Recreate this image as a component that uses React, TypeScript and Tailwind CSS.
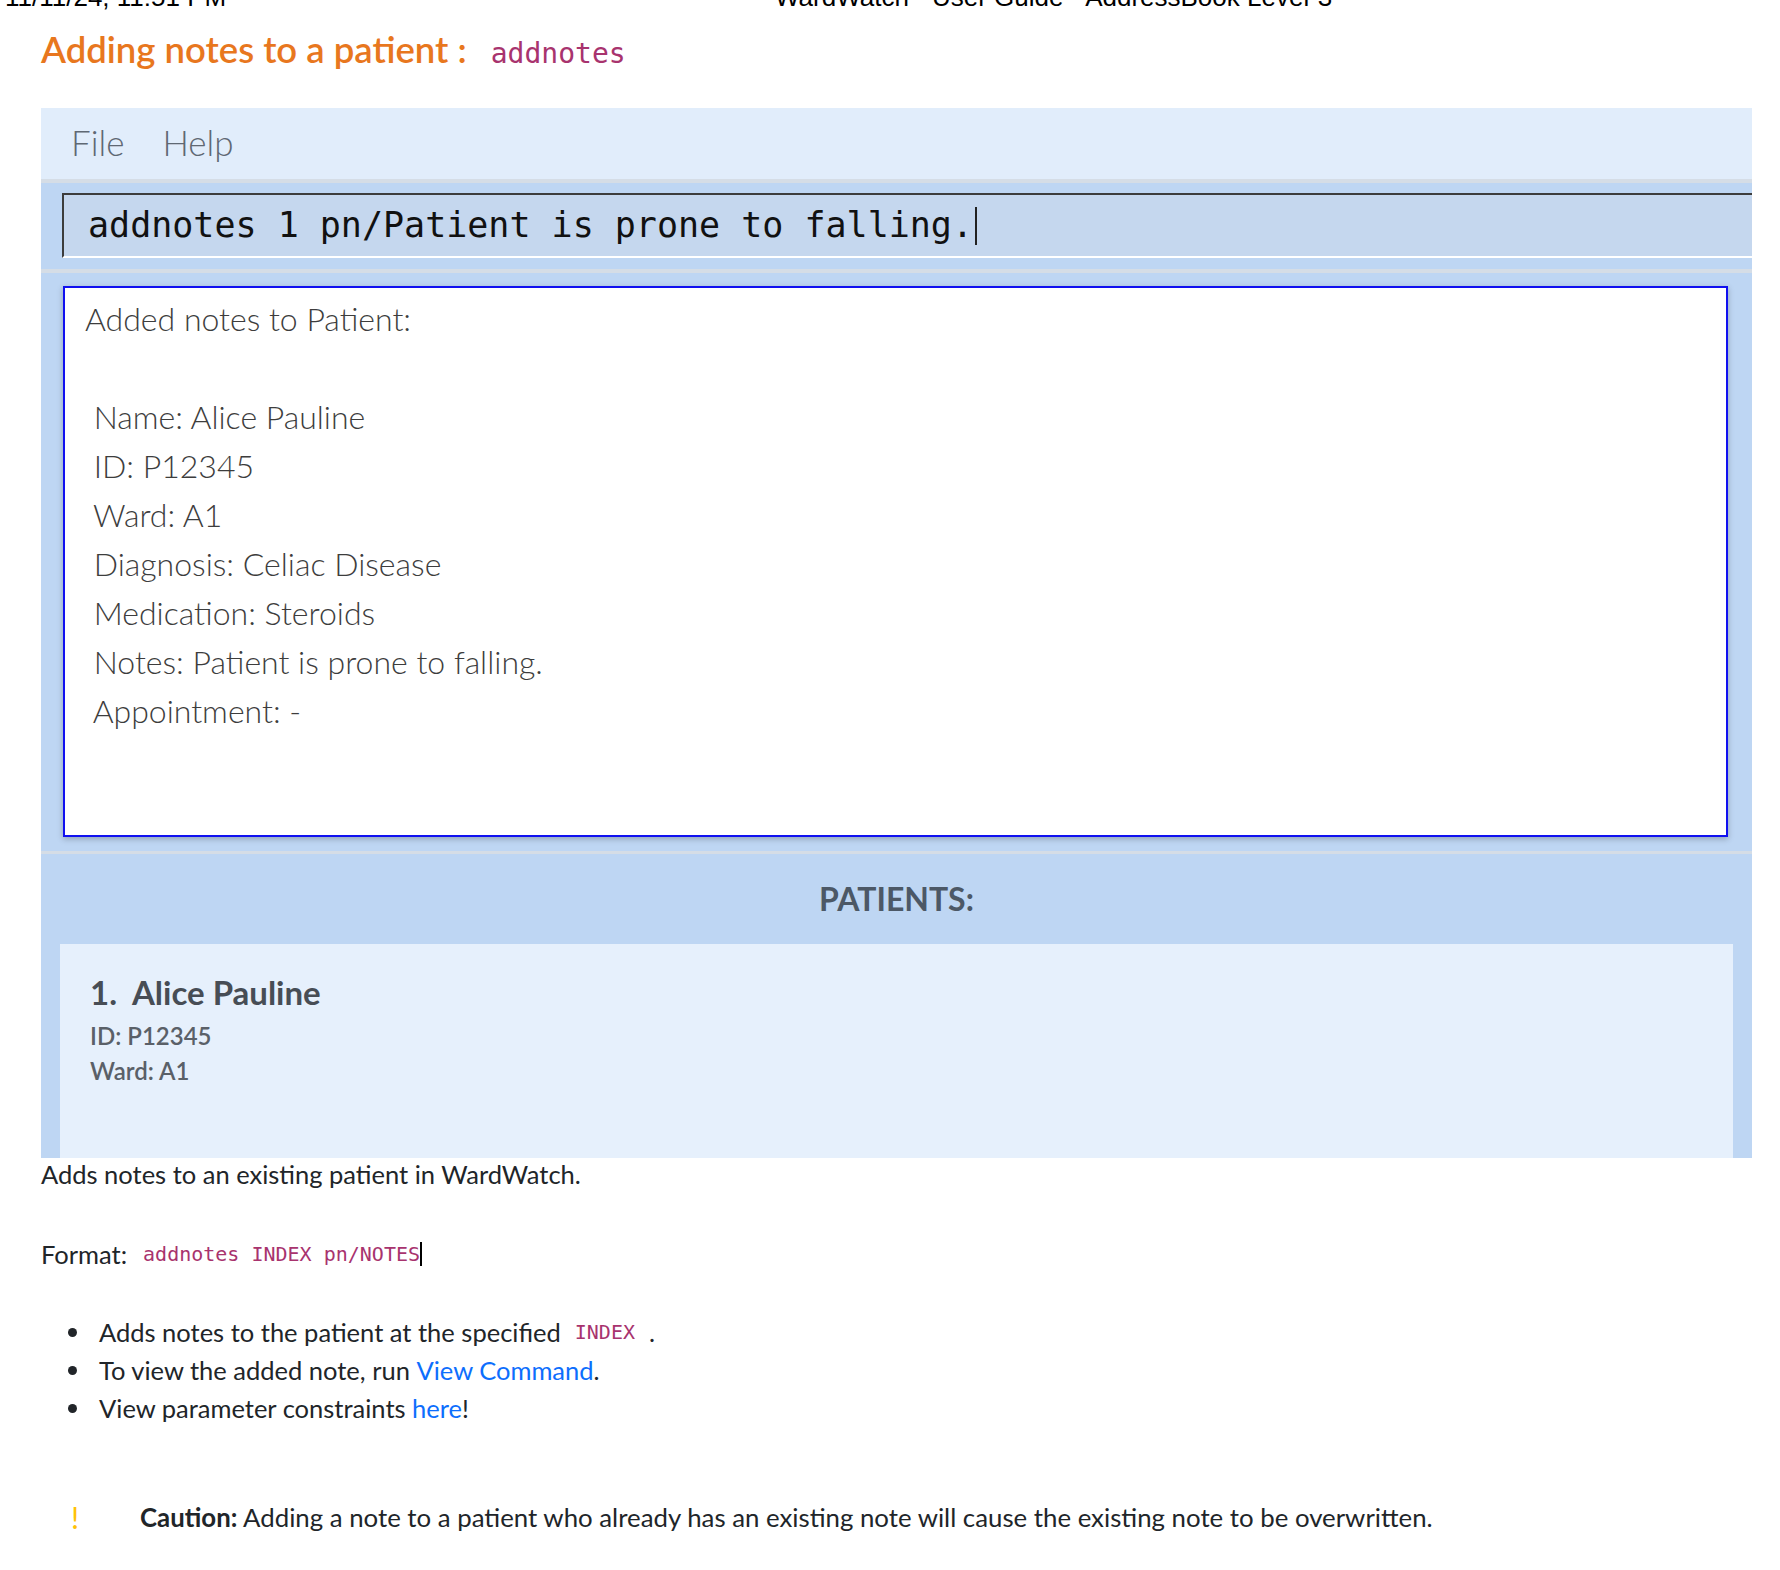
import React from "react";

const resultLines = [
  "Added notes to Patient:",
  "",
  " Name: Alice Pauline",
  " ID: P12345",
  " Ward: A1",
  " Diagnosis: Celiac Disease",
  " Medication: Steroids",
  " Notes: Patient is prone to falling.",
  " Appointment: -",
];

const App: React.FC = () => {
  return (
    <div className="relative w-[1780px] h-[1570px] overflow-hidden bg-white font-['Lato','Noto_Sans',sans-serif] text-[#212529]">
      {/* print header, cut off at the top */}
      <div className="-mt-[16px] flex h-[26px] items-end font-['Liberation_Sans',Arial,sans-serif] text-[26px] leading-[26px] text-black">
        <span className="w-[775px] shrink-0 pl-[5px]">11/11/24, 11:51 PM</span>
        <span>WardWatch - User Guide - AddressBook Level-3</span>
      </div>

      <div className="pl-[41px] pr-[28px]">
        {/* section title */}
        <h4 className="mt-[19px] flex h-[40px] items-baseline text-[36.5px] font-semibold leading-[40px] text-[#e8771e]">
          Adding notes to a patient :
          <code className="ml-[24px] font-['DejaVu_Sans_Mono',monospace] text-[28px] font-normal text-[#a8336e]">
            addnotes
          </code>
        </h4>

        {/* app screenshot */}
        <div className="mt-[39px] w-[1711px] bg-[#bed6f3]">
          {/* menu bar */}
          <div className="flex h-[71px] items-center gap-[38px] bg-[#e1edfb] pb-[3px] pl-[30px] text-[35px] font-light text-[#5f6873]">
            <span>File</span>
            <span>Help</span>
          </div>
          <div className="h-[4px] bg-[#d5dde6]" />

          {/* command box */}
          <div className="pl-[21px] pt-[10px] pb-[11px]">
            <div className="flex h-[65px] items-center border-t-2 border-l-2 border-b-2 border-t-[#3c3c3c] border-l-[#3c3c3c] border-b-white bg-[#c5d7ee] pl-[24px] font-['DejaVu_Sans_Mono',monospace] text-[35px] text-[#111]">
              <span>addnotes 1 pn/Patient is prone to falling.</span>
              <span className="ml-[2px] h-[38px] w-[2px] bg-[#222]" />
            </div>
          </div>
          <div className="h-[4px] bg-[#d5dde6]" />

          {/* result display */}
          <div className="pl-[22px] pr-[24px] pt-[13px] pb-[14px]">
            <div className="h-[551px] border-2 border-[#1010f0] bg-white pl-[20px] pt-[6px] shadow-[0_2px_6px_rgba(0,0,0,0.25)]">
              {resultLines.map((line, i) => (
                <div
                  key={i}
                  className="h-[49px] whitespace-pre text-[32px] font-light leading-[49px] text-[#3d3d3d]"
                >
                  {line}
                </div>
              ))}
            </div>
          </div>
          <div className="h-[3px] bg-[#d5dde6]" />

          {/* patient list */}
          <div className="flex h-[90px] items-center justify-center text-[32px] font-bold text-[#4c5866]">
            PATIENTS:
          </div>
          <div className="px-[19px]">
            <div className="h-[214px] bg-[#e6f0fc] pl-[30px] pt-[29px]">
              <div className="whitespace-pre text-[33px] font-bold leading-[38px] text-[#474d55]">
                1.  Alice Pauline
              </div>
              <div className="mt-[7px] text-[24px] font-semibold leading-[35px] text-[#5a6068]">
                ID: P12345
              </div>
              <div className="text-[24px] font-semibold leading-[35px] text-[#5a6068]">Ward: A1</div>
            </div>
          </div>
        </div>

        {/* guide text */}
        <p className="text-[25.5px] leading-[33px]">Adds notes to an existing patient in WardWatch.</p>

        <p className="mt-[45px] flex items-center text-[25.5px] leading-[36px]">
          Format:
          <code className="ml-[16px] font-['DejaVu_Sans_Mono',monospace] text-[20px] text-[#a8336e]">
            addnotes INDEX pn/NOTES
          </code>
          <span className="h-[24px] w-[2px] bg-black" />
        </p>

        <ul className="mt-[42px] flex flex-col gap-[2px] pl-[27px] text-[25.5px] leading-[36px]">
          <li className="flex items-center">
            <span className="mr-[22px] h-[9px] w-[9px] rounded-full bg-[#212529]" />
            Adds notes to the patient at the specified
            <code className="mx-[8px] px-[6px] font-['DejaVu_Sans_Mono',monospace] text-[20px] text-[#a8336e]">
              INDEX
            </code>
            .
          </li>
          <li className="flex items-center">
            <span className="mr-[22px] h-[9px] w-[9px] rounded-full bg-[#212529]" />
            To view the added note, run&nbsp;
            <a className="text-[#0d6efd]">View Command</a>.
          </li>
          <li className="flex items-center">
            <span className="mr-[22px] h-[9px] w-[9px] rounded-full bg-[#212529]" />
            View parameter constraints&nbsp;<a className="text-[#0d6efd]">here</a>!
          </li>
        </ul>

        {/* caution box */}
        <div className="mt-[73px] flex items-center text-[25.8px] leading-[36px]">
          <span className="w-[99px] pl-[30px] text-[30px] leading-[36px] text-[#ffc107]">!</span>
          <span>
            <b className="font-bold">Caution:</b> Adding a note to a patient who already has an existing note will
            cause the existing note to be overwritten.
          </span>
        </div>
      </div>
    </div>
  );
};

export default App;
